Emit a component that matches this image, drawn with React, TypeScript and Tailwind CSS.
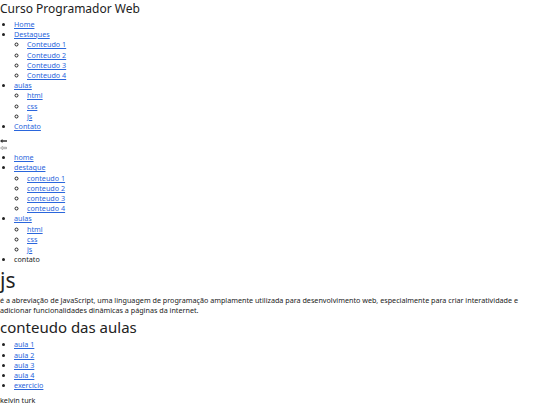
import React from "react";

const link = "text-[#2a66dc] underline";

function Nav({ items }: { items: { label: string; href?: boolean; children?: string[] }[] }) {
  return (
    <ul className="list-disc pl-[14px]">
      {items.map((it) => (
        <li key={it.label}>
          {it.href === false ? <span>{it.label}</span> : <a href="#" className={link}>{it.label}</a>}
          {it.children && (
            <ul className="list-[circle] pl-[13px]">
              {it.children.map((c) => (
                <li key={c}>
                  <a href="#" className={link}>{c}</a>
                </li>
              ))}
            </ul>
          )}
        </li>
      ))}
    </ul>
  );
}

export default function App() {
  return (
    <div className="w-[540px] h-[405px] overflow-hidden bg-white text-[#222] text-[7.2px] leading-[10.2px] font-['Noto_Sans',sans-serif]">
      <header>
        <h1 className="text-[12px] leading-[18px] pb-[1px] m-0">Curso Programador Web</h1>
        <Nav
          items={[
            { label: "Home" },
            { label: "Destaques", children: ["Conteudo 1", "Conteudo 2", "Conteudo 3", "Conteudo 4"] },
            { label: "aulas", children: ["html", "css", "js"] },
            { label: "Contato" },
          ]}
        />
      </header>
      <div className="mt-[8px] mb-[2px] flex flex-col gap-[3px]">
        <svg width="7" height="4" viewBox="0 0 7 4">
          <path d="M0 2 L2.5 0 V1.3 H7 V2.7 H2.5 V4 Z" fill="#333" />
        </svg>
        <svg width="7" height="4" viewBox="0 0 7 4">
          <path d="M0.5 2 L2.5 0.5 V1.3 H6.5 V2.7 H2.5 V3.5 Z" fill="none" stroke="#888" strokeWidth="0.7" />
        </svg>
      </div>
      <Nav
        items={[
          { label: "home" },
          { label: "destaque", children: ["conteudo 1", "conteudo 2", "conteudo 3", "conteudo 4"] },
          { label: "aulas", children: ["html", "css", "js"] },
          { label: "contato", href: false },
        ]}
      />
      <main>
        <h2 className="text-[21px] leading-[30px] mt-[1px]">js</h2>
        <p className="leading-[10px]">
          é a abreviação de JavaScript, uma linguagem de programação amplamente utilizada para desenvolvimento web, especialmente para criar interatividade e adicionar funcionalidades dinâmicas a páginas da internet.
        </p>
        <h2 className="text-[15px] leading-[22px] mt-[1px]">conteudo das aulas</h2>
        <ul className="list-disc pl-[14px] mt-[1px]">
          {["aula 1", "aula 2", "aula 3", "aula 4", "exercicio"].map((a) => (
            <li key={a}>
              <a href="#" className={link}>{a}</a>
            </li>
          ))}
        </ul>
      </main>
      <footer className="mt-[5px]">kelvin turk</footer>
    </div>
  );
}
